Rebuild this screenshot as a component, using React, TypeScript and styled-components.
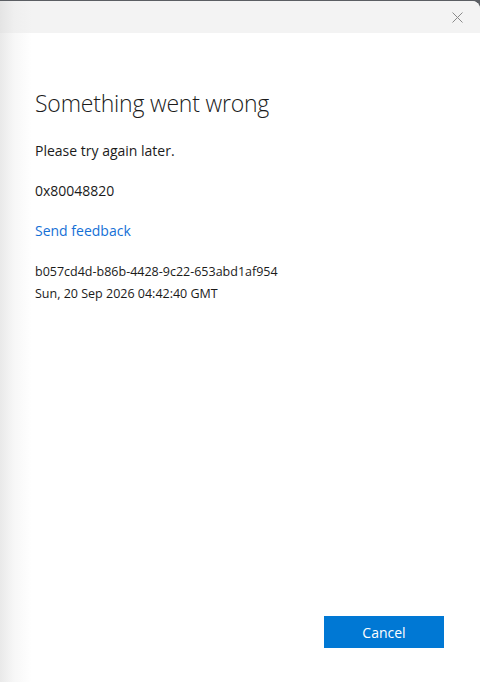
import React from "react";
import styled, { createGlobalStyle } from "styled-components";

const Global = createGlobalStyle`
  html, body { margin: 0; padding: 0; background: #5b5e63; }
  #root { width: 480px; height: 682px; }
`;

const Frame = styled.div`
  width: 480px;
  height: 682px;
  padding-top: 1px;
  box-sizing: border-box;
  background: #5b5e63;
`;

const Window = styled.div`
  height: 681px;
  display: flex;
  flex-direction: column;
  border-top-right-radius: 8px;
  overflow: hidden;
  background: linear-gradient(to right, #e9e9e9 0px, #f7f7f7 14px, #ffffff 32px);
  font-family: "Open Sans", "Noto Sans", sans-serif;
  color: #1a1a1a;
`;

const TitleBar = styled.div`
  height: 32px;
  flex: none;
  display: flex;
  justify-content: flex-end;
  align-items: center;
  padding-right: 17px;
  background: linear-gradient(to right, #e4e4e4 0px, #efefef 14px, #f3f3f3 32px);
`;

const CloseButton = styled.button`
  border: 0;
  padding: 0;
  background: transparent;
  width: 12px;
  height: 12px;
  display: flex;
  align-items: center;
  justify-content: center;
`;

const Body = styled.div`
  flex: 1;
  display: flex;
  flex-direction: column;
  padding: 54px 36px 34px 35px;
`;

const Heading = styled.h1`
  margin: 0 0 22px;
  font-weight: 300;
  font-size: 23px;
  line-height: 32px;
  letter-spacing: -0.2px;
  color: #1b1b1b;
`;

const Para = styled.p`
  margin: 0 0 20px;
  font-size: 14px;
  line-height: 20px;
  color: #1b1b1b;
`;

const Link = styled.a`
  display: block;
  margin: 0 0 20px;
  font-size: 14px;
  line-height: 20px;
  color: #1570d6;
  text-decoration: none;
`;

const Meta = styled.div`
  font-size: 12.5px;
  line-height: 22px;
  color: #1b1b1b;
`;

const Footer = styled.div`
  margin-top: auto;
  display: flex;
  justify-content: flex-end;
`;

const PrimaryButton = styled.button`
  width: 120px;
  height: 32px;
  border: 0;
  background: #0078d4;
  color: #ffffff;
  font-family: "Open Sans", "Noto Sans", sans-serif;
  font-size: 14px;
`;

export default function App() {
  return (
    <>
      <Global />
      <Frame>
        <Window>
          <TitleBar>
            <CloseButton aria-label="Close">
              <svg width="11" height="11" viewBox="0 0 11 11">
                <path d="M0.5 0.5 L10.5 10.5 M10.5 0.5 L0.5 10.5" stroke="#8a8a8a" strokeWidth="1" fill="none" />
              </svg>
            </CloseButton>
          </TitleBar>
          <Body>
            <Heading>Something went wrong</Heading>
            <Para>Please try again later.</Para>
            <Para>0x80048820</Para>
            <Link href="#">Send feedback</Link>
            <Meta>b057cd4d-b86b-4428-9c22-653abd1af954</Meta>
            <Meta>Sun, 20 Sep 2026 04:42:40 GMT</Meta>
            <Footer>
              <PrimaryButton>Cancel</PrimaryButton>
            </Footer>
          </Body>
        </Window>
      </Frame>
    </>
  );
}
